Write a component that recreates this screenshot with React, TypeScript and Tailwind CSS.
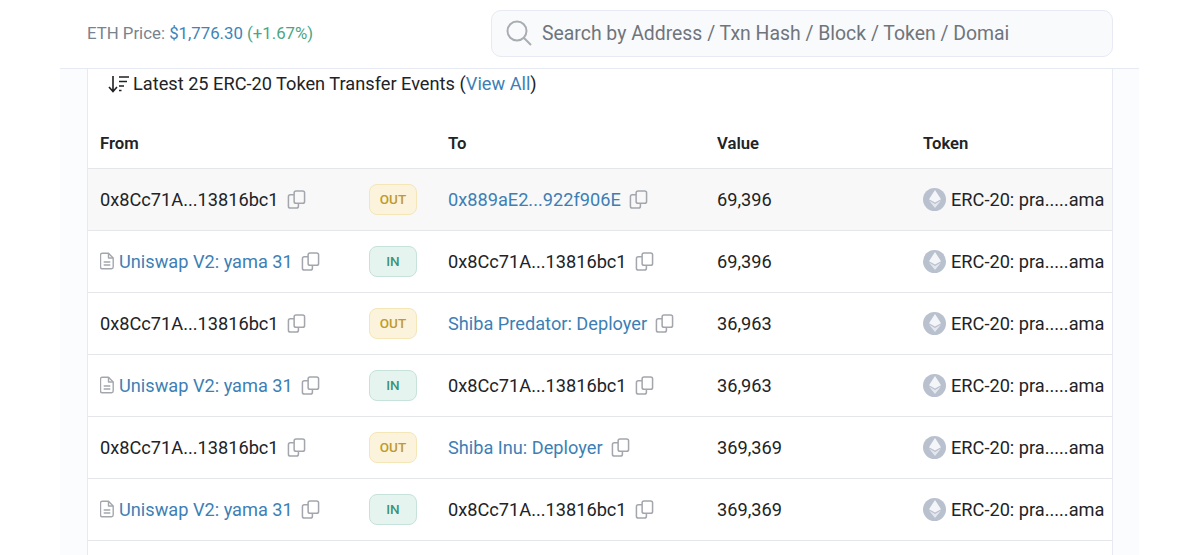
const rows = [
  { out: true, to: '0x889aE2...922f906E', toLink: true, value: '69,396' },
  { out: false, to: '0x8Cc71A...13816bc1', toLink: false, value: '69,396' },
  { out: true, to: 'Shiba Predator: Deployer', toLink: true, value: '36,963' },
  { out: false, to: '0x8Cc71A...13816bc1', toLink: false, value: '36,963' },
  { out: true, to: 'Shiba Inu: Deployer', toLink: true, value: '369,369' },
  { out: false, to: '0x8Cc71A...13816bc1', toLink: false, value: '369,369' },
];

function CopyIcon() {
  return (
    <svg viewBox="0 0 20 20" className="ml-[8px] h-[19px] w-[19px] shrink-0 text-[#a3a7ad]" fill="none" stroke="currentColor" strokeWidth="1.6" strokeLinejoin="round">
      <rect x="7.5" y="1" width="11" height="13" rx="2" />
      <path d="M7.5 5H3.5a2 2 0 0 0-2 2v10a2 2 0 0 0 2 2h6.5a2 2 0 0 0 2-2v-3" />
    </svg>
  );
}

function FileIcon() {
  return (
    <svg viewBox="0 0 14 17" className="mr-[5px] h-[18px] w-[14px] shrink-0 text-[#a3a7ad]" fill="none" stroke="currentColor" strokeWidth="1.4" strokeLinejoin="round">
      <path d="M2.2 0.8h6.3l4.7 4.7v9a1.7 1.7 0 0 1-1.7 1.7H2.2a1.7 1.7 0 0 1-1.7-1.7V2.5A1.7 1.7 0 0 1 2.2 0.8z" />
      <path d="M8.5 0.8v4.7h4.7M3.7 9.5h6.6M3.7 12.5h6.6" />
    </svg>
  );
}

function EthIcon() {
  return (
    <span className="mr-[5px] flex h-[23px] w-[23px] shrink-0 items-center justify-center rounded-full bg-[#b9c1cf]">
      <svg viewBox="0 0 12 18" className="h-[18px] w-[12px]">
        <path d="M6 0L0 9.2l6 3.4 6-3.4z" fill="#f4f5f8" />
        <path d="M0 10.6L6 18l6-7.4-6 3.5z" fill="#e4e7ee" />
      </svg>
    </span>
  );
}

function SortIcon() {
  return (
    <svg viewBox="0 0 22 18" className="mr-[3px] h-[18px] w-[22px] text-[#1e2022]" fill="none" stroke="currentColor" strokeWidth="1.6">
      <path d="M5 1v15M1 12l4 4.5L9 12" />
      <path d="M11 2h10M11 6.5h8M11 11h5M11 15.5h2.5" />
    </svg>
  );
}

function Badge({ out }: { out: boolean }) {
  return out ? (
    <span className="flex h-[31px] w-[48px] items-center justify-center rounded-[8px] border border-[#f5e6b8] bg-[#fbf3dc] text-[13.5px] font-medium text-[#c09a2e]">
      OUT
    </span>
  ) : (
    <span className="flex h-[31px] w-[48px] items-center justify-center rounded-[8px] border border-[#c6e2da] bg-[#e6f4f0] text-[13.5px] font-medium text-[#3d9478]">
      IN
    </span>
  );
}

export default function App() {
  return (
    <div className="h-[555px] w-[1200px] overflow-hidden bg-white font-['Roboto',sans-serif] text-[18.2px] text-[#212326]">
      <div className="flex h-[68px] items-center pl-[87px]">
        <div className="w-[404px] text-[16.8px] text-[#77838f]">
          ETH Price: <span className="text-[#3d84b8]">$1,776.30</span> <span className="text-[#4ba585]">(+1.67%)</span>
        </div>
        <div className="mb-[2px] flex h-[47px] w-[622px] items-center rounded-[10px] border border-[#e7eaf3] bg-[#f9fafb] pl-[14px]">
          <svg viewBox="0 0 26 26" className="mr-[10px] h-[26px] w-[26px] shrink-0 text-[#a9adb2]" fill="none" stroke="currentColor" strokeWidth="2">
            <circle cx="11" cy="11" r="9.5" />
            <path d="M18 18l7 7" />
          </svg>
          <div className="whitespace-nowrap pt-[2px] text-[19.4px] text-[#6f757b]">
            Search by Address / Txn Hash / Block / Token / Domai
          </div>
        </div>
      </div>
      <div className="ml-[60px] mr-[61px] h-[487px] border-t border-[#e7eaf3] bg-[#fbfcfd] pl-[27px] pr-[26px]">
        <div className="h-full border-x border-[#e7eaf3] bg-white">
          <div className="flex h-[29px] items-center pl-[20px]">
            <SortIcon />
            <span>
              Latest 25 ERC-20 Token Transfer Events (<span className="text-[#3d7fb5]">View All</span>)
            </span>
          </div>
          <div className="grid h-[71px] grid-cols-[281px_79px_269px_206px_1fr] items-center border-b border-[#e4e6ea] pt-[22px] text-[16.7px] font-semibold">
            <span className="pl-[12px]">From</span>
            <span />
            <span>To</span>
            <span>Value</span>
            <span>Token</span>
          </div>
          {rows.map((row, i) => (
            <div
              key={i}
              className={`grid h-[62px] grid-cols-[281px_79px_269px_206px_1fr] items-center border-b border-[#e4e6ea] ${i === 0 ? 'bg-[#f8f8f9]' : ''}`}
            >
              <div className="flex items-center pl-[12px]">
                {row.out ? (
                  <span>0x8Cc71A...13816bc1</span>
                ) : (
                  <>
                    <FileIcon />
                    <span className="text-[#3d7fb5]">Uniswap V2: yama 31</span>
                  </>
                )}
                <CopyIcon />
              </div>
              <Badge out={row.out} />
              <div className="flex items-center">
                <span className={row.toLink ? 'text-[#3d7fb5]' : ''}>{row.to}</span>
                <CopyIcon />
              </div>
              <span>{row.value}</span>
              <div className="flex items-center whitespace-nowrap">
                <EthIcon />
                <span>ERC-20: pra.....ama</span>
              </div>
            </div>
          ))}
        </div>
      </div>
    </div>
  );
}
